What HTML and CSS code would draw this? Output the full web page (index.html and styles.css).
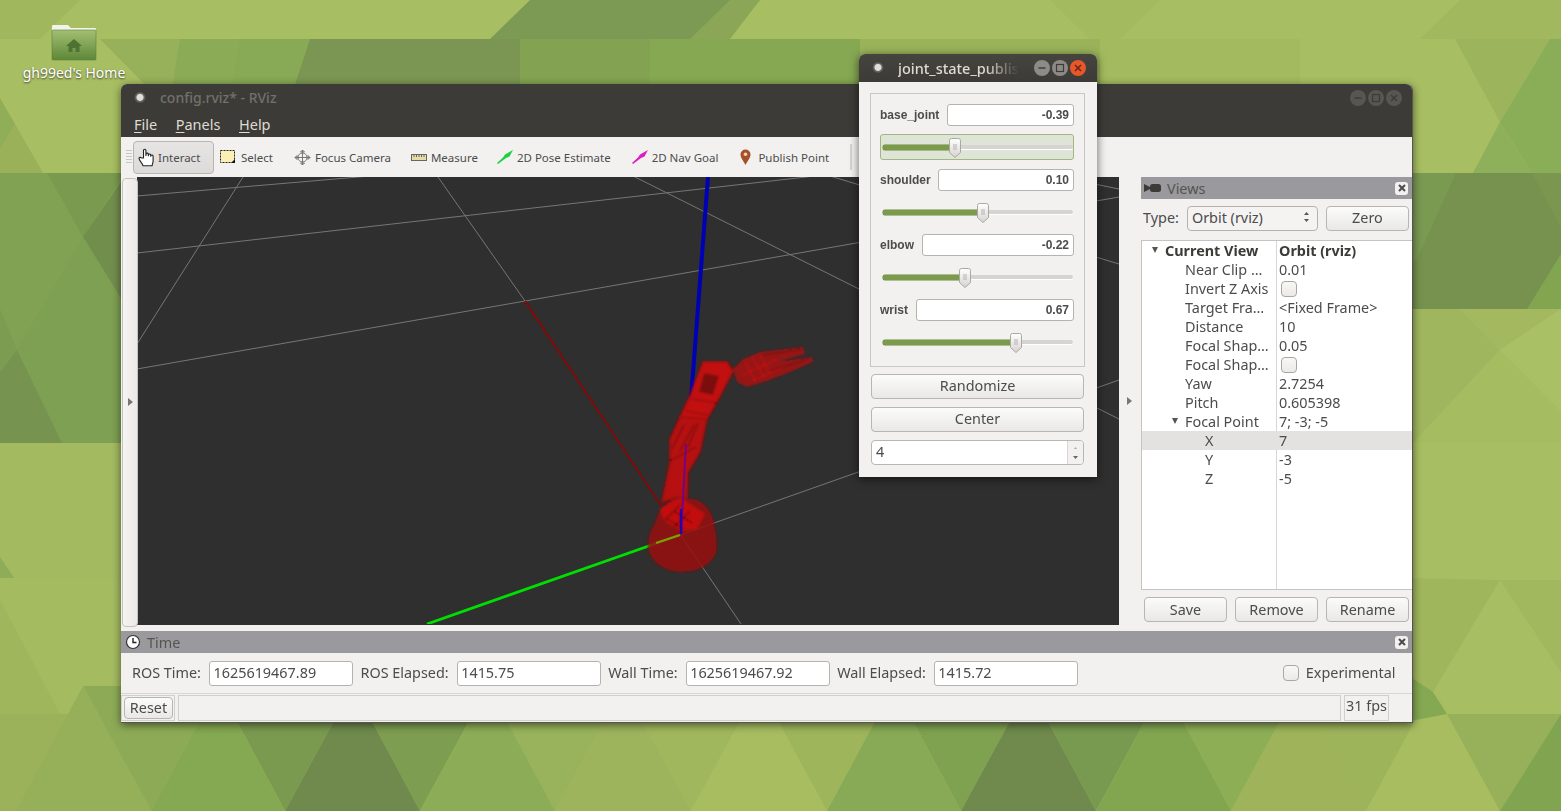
FILE: index.html
```html
<!DOCTYPE html>
<html lang="en">
<head>
<meta charset="utf-8">
<title>config.rviz* - RViz</title>
<link rel="stylesheet" href="styles.css">
</head>
<body>
<svg class="wallpaper" viewBox="0 0 1561 811" width="1561" height="811">
  <rect width="1561" height="811" fill="#a8be62"/>
  <!-- top band -->
  <polygon points="0,0 80,0 40,39 0,39" fill="#a1b75d"/>
  <polygon points="490,39 530,0 760,0 720,39" fill="#7d9a54"/>
  <polygon points="690,39 730,0 760,0 730,39" fill="#8aa656"/>
  <polygon points="1050,0 1160,0 1120,39 1090,39" fill="#a4ba5f"/>
  <polygon points="1460,0 1561,0 1561,39 1420,39" fill="#a2b85e"/>
  <polygon points="100,39 310,39 260,100 160,100" fill="#97b05a"/>
  <polygon points="180,39 250,39 240,100 170,100" fill="#8cab57"/>
  <polygon points="240,39 330,39 300,100 230,100" fill="#88a955"/>
  <polygon points="310,39 520,39 520,100 290,100" fill="#7b9652"/>
  <polygon points="520,39 650,39 650,100 520,100" fill="#84a352"/>
  <polygon points="650,39 860,39 860,100 650,100" fill="#86a852"/>
  <polygon points="860,39 1100,39 1100,100 860,100" fill="#9ab35a"/>
  <polygon points="1100,39 1300,39 1300,100 1100,100" fill="#a4ba5f"/>
  <!-- left strip -->
  <polygon points="0,98 15,124 0,150" fill="#90ad58"/>
  <polygon points="15,124 43,173 0,173 0,150" fill="#9ab15a"/>
  <polygon points="0,173 130,173 130,443 0,443" fill="#80a252"/>
  <polygon points="47,173 125,173 83,237" fill="#7a9a50"/>
  <polygon points="83,237 125,176 125,305" fill="#728e4d"/>
  <polygon points="83,237 125,305 125,443 62,443 17,350" fill="#7ea052"/>
  <polygon points="0,372 17,350 62,443 0,443" fill="#769350"/>
  <polygon points="0,309 17,350 0,372" fill="#7c9c51"/>
  <polygon points="0,443 125,443 125,578 0,578" fill="#a3ba60"/>
  <polygon points="0,557 15,579 0,600" fill="#8fad58"/>
  <polygon points="0,578 125,578 125,714 0,714" fill="#a5bb60"/>
  <polygon points="0,600 60,714 0,714" fill="#9fb65c"/>
  <polygon points="0,714 125,714 125,811 0,811" fill="#9cb25a"/>
  <!-- bottom band: down wedges -->
  <polygon points="83,686 218,686 151,811" fill="#8dab56"/>
  <polygon points="218,686 353,686 285,811" fill="#7a9a50"/>
  <polygon points="353,686 488,686 420,811" fill="#7d9d50"/>
  <polygon points="488,686 623,686 555,811" fill="#98b35b"/>
  <polygon points="623,686 759,686 691,811" fill="#a1b75d"/>
  <polygon points="759,686 894,686 827,811" fill="#9fb55c"/>
  <polygon points="894,686 1029,686 961,811" fill="#7fa250"/>
  <polygon points="1029,686 1164,686 1096,811" fill="#789a50"/>
  <polygon points="1164,686 1299,686 1231,811" fill="#8eae56"/>
  <polygon points="1299,686 1434,686 1366,811" fill="#9eb45b"/>
  <!-- bottom band: up triangles -->
  <polygon points="83,686 151,811 16,811" fill="#95b059"/>
  <polygon points="218,686 285,811 151,811" fill="#85a852"/>
  <polygon points="353,686 420,811 285,811" fill="#6f8a4c"/>
  <polygon points="488,686 555,811 420,811" fill="#8dac57"/>
  <polygon points="623,686 691,811 555,811" fill="#9db35c"/>
  <polygon points="759,686 827,811 691,811" fill="#a8bd60"/>
  <polygon points="894,686 961,811 827,811" fill="#88aa56"/>
  <polygon points="1029,686 1096,811 961,811" fill="#6f8a4c"/>
  <polygon points="1164,686 1231,811 1096,811" fill="#82a650"/>
  <polygon points="1299,686 1366,811 1231,811" fill="#9fb45a"/>
  <polygon points="1434,686 1500,811 1366,811" fill="#a8bd60"/>
  <!-- right strip -->
  <polygon points="1455,39 1550,39 1500,122" fill="#9cb45b"/>
  <polygon points="1550,39 1561,39 1561,173 1532,173 1500,122" fill="#8aad58"/>
  <polygon points="1473,173 1500,122 1532,173" fill="#8fb05a"/>
  <polygon points="1400,173 1561,173 1561,309 1400,309" fill="#76924e"/>
  <polygon points="1400,173 1456,173 1417,259 1400,270" fill="#7a9a52"/>
  <polygon points="1532,173 1561,173 1561,228" fill="#7a964f"/>
  <polygon points="1561,254 1561,309 1527,309" fill="#82a550"/>
  <polygon points="1400,309 1460,309 1500,350 1413,443 1400,443" fill="#a0b65e"/>
  <polygon points="1460,309 1561,309 1500,350" fill="#a4b95f"/>
  <polygon points="1500,350 1561,309 1561,412" fill="#a9c064"/>
  <polygon points="1413,443 1500,350 1561,412 1561,443" fill="#a6bc60"/>
  <polygon points="1400,578 1500,580 1433,692 1400,670" fill="#a0b65d"/>
  <polygon points="1500,580 1561,580 1561,672" fill="#a2b85e"/>
  <polygon points="1400,670 1433,692 1447,714 1400,723" fill="#85a852"/>
  <polygon points="1447,714 1561,714 1500,811" fill="#97b05a"/>
  <polygon points="1561,714 1561,811 1500,811" fill="#80a450"/>
</svg>

<div class="desk-icon">
  <svg width="46" height="38" viewBox="0 0 46 38">
    <defs><linearGradient id="fold" x1="0" y1="0" x2="0" y2="1"><stop offset="0" stop-color="#a3bf72"/><stop offset="1" stop-color="#5d8737"/></linearGradient></defs>
    <path d="M1 5V3q0-1 1-1h15l3 3h24q1 0 1 1v3H1z" fill="#f2f3ea"/>
    <rect x="1" y="7" width="44" height="30" rx="1" fill="url(#fold)" stroke="#5f7f3c" stroke-width=".6"/>
    <path d="M23 16l-8 7h2.500v6h4v-4h3v4h4v-6H31z" fill="#4f7232"/>
  </svg>
  <span class="desk-label">gh99ed's Home</span>
</div>

<div class="window rviz">
  <div class="titlebar">
    <span class="menu-dot"></span>
    <span class="title-dim">config.rviz* - RViz</span>
    <span class="win-btns dim">
      <span class="wbtn"><svg width="10" height="10" viewBox="0 0 10 10"><path d="M1.500 5h7" stroke="#3c3b37" stroke-width="1.400"/></svg></span>
      <span class="wbtn"><svg width="10" height="10" viewBox="0 0 10 10"><rect x="1.500" y="1.500" width="7" height="7" fill="none" stroke="#3c3b37" stroke-width="1.200"/></svg></span>
      <span class="wbtn"><svg width="10" height="10" viewBox="0 0 10 10"><path d="M2 2l6 6M8 2l-6 6" stroke="#3c3b37" stroke-width="1.400"/></svg></span>
    </span>
  </div>
  <div class="menubar">
    <span class="menu"><u>F</u>ile</span>
    <span class="menu"><u>P</u>anels</span>
    <span class="menu"><u>H</u>elp</span>
  </div>
  <div class="toolbar">
    <span class="grip"></span>
    <div class="tool active">
      <svg width="18" height="20" viewBox="0 0 18 20"><path d="M5.500 10V2.500a1.200 1.200 0 0 1 2.400 0V8l.1-2a1.200 1.200 0 0 1 2.300 0v2.300l.1-1.500a1.200 1.200 0 0 1 2.300 0v2l.1-1a1.200 1.200 0 0 1 2.300 0v5.500c0 2-1 3-1 4.500H5c0-2-4-5-4-7.500 0-1.200 1.800-1.200 2.500-.3z" fill="#fff" stroke="#222" stroke-width="1.100"/></svg>
      <span>Interact</span>
    </div>
    <div class="tool t-select">
      <svg width="16" height="14" viewBox="0 0 16 14"><rect x=".5" y=".5" width="14" height="12" fill="#fbf0b4" stroke="#222" stroke-dasharray="2 1"/><path d="M11 13h4V9z" fill="#111"/></svg>
      <span>Select</span>
    </div>
    <div class="tool t-focus">
      <svg width="17" height="17" viewBox="0 0 17 17" fill="none" stroke="#777" stroke-width="1"><circle cx="8.500" cy="8.500" r="4.500"/><path d="M8.500 1v15M1 8.500h15M8.500 1l-2 2h4zM8.500 16l-2-2h4zM1 8.500l2-2v4zM16 8.500l-2-2v4z"/></svg>
      <span>Focus Camera</span>
    </div>
    <div class="tool t-measure">
      <svg width="16" height="7" viewBox="0 0 16 7"><rect x=".5" y=".5" width="15" height="6" fill="#e5dca6" stroke="#666"/><path d="M3 1v2M5.500 1v2M8 1v2M10.500 1v2M13 1v2" stroke="#666"/></svg>
      <span>Measure</span>
    </div>
    <div class="tool t-pose">
      <svg width="16" height="14" viewBox="0 0 16 14"><path d="M0 13L6 7.500 8 4.500 16 0 12.500 6.500 9 8 1 14z" fill="#1fd13f"/></svg>
      <span>2D Pose Estimate</span>
    </div>
    <div class="tool t-nav">
      <svg width="16" height="14" viewBox="0 0 16 14"><path d="M0 13L6 7.500 8 4.500 16 0 12.500 6.500 9 8 1 14z" fill="#d91fc0"/></svg>
      <span>2D Nav Goal</span>
    </div>
    <div class="tool t-point">
      <svg width="11" height="16" viewBox="0 0 11 16"><path d="M5.500 16C3.500 12 .5 9 .5 5.500a5 5 0 0 1 10 0C10.500 9 7.500 12 5.500 16z" fill="#a5502c"/><circle cx="5.500" cy="5.300" r="1.800" fill="#f3d3b5"/></svg>
      <span>Publish Point</span>
    </div>
    <span class="tool-sep"></span>
  </div>

  <div class="main">
    <div class="left-dock"><span class="arrow-r"></span></div>
    <div class="viewport">
      <svg class="scene" viewBox="137 178 982 447" width="982" height="447">
        <defs><filter id="soft" x="-10%" y="-10%" width="120%" height="120%"><feGaussianBlur stdDeviation=".8"/></filter></defs>
        <g stroke="#8e8e8e" stroke-width="1" fill="none" opacity=".75">
          <path d="M137 197L370 177"/>
          <path d="M137 254L815 177"/>
          <path d="M137 370L1119 198"/>
          <path d="M680 536L1119 381"/>
          <path d="M243 178L137 345"/>
          <path d="M438 178L525 302"/>
          <path d="M680 535L741 625"/>
          <path d="M633 177L1119 420"/>
          <path d="M830 177L1119 265"/>
          <path d="M1060 178L1119 190"/>
        </g>
        <path d="M525 302L680 535" stroke="#960000" stroke-width="1.500"/>
        <path d="M708 178L691 400" stroke="#0000b4" stroke-width="4"/>
        <path d="M427 625L680 536" stroke="#00e000" stroke-width="2.800"/>
        <g filter="url(#soft)">
          <path d="M655 524q4-18 18-24h22q16 6 19 24 3 12 3 24c0 14-15 25-35 25-18 0-33-10-34-26q0-13 7-23z" fill="#990808" opacity=".85"/>
          <path d="M660 510l20-12 25 17-8 15-15 2-18-10z" fill="#c81010" opacity=".9"/>
          <path d="M667 520l17 10M674 512l18 12M680 506l-16 16M690 512l-16 16" stroke="#6a0404" stroke-width="1.100" fill="none"/>
          <path d="M662 503l8-40v-23l10-22 27 2-7 33-12 20-1 27-10-2z" fill="#c41010" stroke="#a00808" stroke-width="2" opacity=".92"/>
          <path d="M680 418l10-21 13-34h24l6 9-13 25-13 23z" fill="#cc1010" stroke="#a80808" stroke-width="2" opacity=".94"/>
          <path d="M704 374l15 3-6 19-14-3z" fill="#600606" opacity=".7"/>
          <path d="M692 400l26 4M686 412l22 4" stroke="#7a0606" stroke-width="1" fill="none"/>
          <path d="M672 450l12-24M680 452l14-26M688 448l10-24M670 462l26-14" stroke="#700505" stroke-width="1.400" fill="none"/>
          <path d="M733 370l10-10 17-7 43-5 2 7-28 8 35-5 1 5-23 10-23 9-20 6-10-5z" fill="#b00c0c" opacity=".8"/>
          <path d="M745 362l10 20M752 358l12 20M760 356l10 19M742 376l36-16M752 382l32-14" stroke="#d81414" stroke-width="1" fill="none"/>
          <path d="M762 356l40-6M770 372l38-12" stroke="#6e0606" stroke-width="1" fill="none"/>
        </g>
        <path d="M686 445L681 535" stroke="#6a00a0" stroke-width="2" opacity=".85"/>
        <path d="M681 510v25" stroke="#2a00b0" stroke-width="2.500"/>
        <path d="M656 544L680 536" stroke="#7fa000" stroke-width="2.200"/>
      </svg>
    </div>
    <div class="splitter"><span class="arrow-r"></span></div>

    <div class="views">
      <div class="dock-head">
        <svg class="cam" width="17" height="10" viewBox="0 0 17 10"><path d="M0 1l6 3v2l-6 3z" fill="#3c3b37"/><rect x="6" y="1" width="11" height="8" rx="2.500" fill="#3c3b37"/></svg>
        <span class="dock-title">Views</span>
        <span class="dock-close"><svg width="8" height="8" viewBox="0 0 8 8"><path d="M1 1l6 6M7 1L1 7" stroke="#4c4c4c" stroke-width="2"/></svg></span>
      </div>
      <div class="type-row">
        <span class="lbl">Type:</span>
        <div class="combo"><span>Orbit (rviz)</span><svg width="7" height="12" viewBox="0 0 7 12"><path d="M3.500 1l2.500 3H1zM3.500 11L1 8h5z" fill="#555"/></svg></div>
        <button class="btn zero">Zero</button>
      </div>
      <div class="tree">
        <div class="tree-col"></div>
        <div class="row"><span class="k bold"><i class="tri i0"></i>Current View</span><span class="v bold">Orbit (rviz)</span></div>
        <div class="row"><span class="k">Near Clip …</span><span class="v">0.01</span></div>
        <div class="row"><span class="k">Invert Z Axis</span><span class="v"><i class="check"></i></span></div>
        <div class="row"><span class="k">Target Fra…</span><span class="v">&lt;Fixed Frame&gt;</span></div>
        <div class="row"><span class="k">Distance</span><span class="v">10</span></div>
        <div class="row"><span class="k">Focal Shap…</span><span class="v">0.05</span></div>
        <div class="row"><span class="k">Focal Shap…</span><span class="v"><i class="check"></i></span></div>
        <div class="row"><span class="k">Yaw</span><span class="v">2.7254</span></div>
        <div class="row"><span class="k">Pitch</span><span class="v">0.605398</span></div>
        <div class="row"><span class="k"><i class="tri i1"></i>Focal Point</span><span class="v">7; -3; -5</span></div>
        <div class="row sel"><span class="k deep">X</span><span class="v">7</span></div>
        <div class="row"><span class="k deep">Y</span><span class="v">-3</span></div>
        <div class="row"><span class="k deep">Z</span><span class="v">-5</span></div>
      </div>
      <div class="view-btns">
        <button class="btn">Save</button>
        <button class="btn">Remove</button>
        <button class="btn">Rename</button>
      </div>
    </div>
  </div>

  <div class="time-head">
    <svg width="16" height="16" viewBox="0 0 16 16"><circle cx="8" cy="8" r="6.500" fill="#fff" stroke="#333" stroke-width="1.200"/><path d="M8 4v4.500h3.500" fill="none" stroke="#222" stroke-width="1.400"/></svg>
    <span class="dock-title">Time</span>
    <span class="dock-close"><svg width="8" height="8" viewBox="0 0 8 8"><path d="M1 1l6 6M7 1L1 7" stroke="#4c4c4c" stroke-width="2"/></svg></span>
  </div>
  <div class="time-row">
    <span class="lbl">ROS Time:</span><span class="field">1625619467.89</span>
    <span class="lbl">ROS Elapsed:</span><span class="field">1415.75</span>
    <span class="lbl">Wall Time:</span><span class="field">1625619467.92</span>
    <span class="lbl">Wall Elapsed:</span><span class="field">1415.72</span>
    <span class="exp"><i class="check"></i><span class="lbl">Experimental</span></span>
  </div>
  <div class="status">
    <div class="reset-box"><button class="btn reset">Reset</button></div>
    <div class="status-msg"></div>
    <div class="fps">31 fps</div>
  </div>
</div>

<div class="window joint">
  <div class="titlebar jt">
    <span class="menu-dot"></span>
    <span class="title-on">joint_state_publis</span>
    <span class="win-btns">
      <span class="wbtn"><svg width="10" height="10" viewBox="0 0 10 10"><path d="M1.500 5h7" stroke="#3c3b37" stroke-width="1.400"/></svg></span>
      <span class="wbtn"><svg width="10" height="10" viewBox="0 0 10 10"><rect x="1.500" y="1.500" width="7" height="7" fill="none" stroke="#3c3b37" stroke-width="1.200"/></svg></span>
      <span class="wbtn close"><svg width="10" height="10" viewBox="0 0 10 10"><path d="M2 2l6 6M8 2l-6 6" stroke="#6a2410" stroke-width="1.500"/></svg></span>
    </span>
  </div>
  <div class="joint-body">
    <div class="group">
      <div class="joint-row"><span class="jl">base_joint</span><span class="jv">-0.39</span></div>
      <div class="slider hot"><div class="track"><div class="fill" style="width:38%"></div><svg class="thumb" style="left:38%" width="12" height="20" viewBox="0 0 12 20"><use href="#th"/></svg></div></div>
      <div class="joint-row"><span class="jl">shoulder</span><span class="jv">0.10</span></div>
      <div class="slider"><div class="track"><div class="fill" style="width:52.600%"></div><svg class="thumb" style="left:52.600%" width="12" height="20" viewBox="0 0 12 20"><use href="#th"/></svg></div></div>
      <div class="joint-row"><span class="jl">elbow</span><span class="jv">-0.22</span></div>
      <div class="slider"><div class="track"><div class="fill" style="width:43.200%"></div><svg class="thumb" style="left:43.200%" width="12" height="20" viewBox="0 0 12 20"><use href="#th"/></svg></div></div>
      <div class="joint-row"><span class="jl">wrist</span><span class="jv">0.67</span></div>
      <div class="slider"><div class="track"><div class="fill" style="width:70%"></div><svg class="thumb" style="left:70%" width="12" height="20" viewBox="0 0 12 20"><use href="#th"/></svg></div></div>
    </div>
    <button class="btn wide">Randomize</button>
    <button class="btn wide">Center</button>
    <div class="spin"><span class="spin-v">4</span><span class="spin-arrows"><svg width="7" height="20" viewBox="0 0 7 20"><path d="M3.500 4l1.500 2H2z" fill="#aaa"/><path d="M3.500 16L1 13h5z" fill="#666"/></svg></span></div>
  </div>
</div>

<svg class="defs" width="0" height="0">
  <defs>
    <linearGradient id="thg" x1="0" y1="0" x2="0" y2="1"><stop offset="0" stop-color="#fff"/><stop offset="1" stop-color="#d5d3d0"/></linearGradient>
    <g id="th">
      <path d="M2.500.5h7a2 2 0 0 1 2 2v12L6 19.500.5 14.500v-12a2 2 0 0 1 2-2z" fill="url(#thg)" stroke="#aaa8a4"/>
      <path d="M4 7h4M4 9h4M4 11h4" stroke="#b4b2ae"/>
    </g>
  </defs>
</svg>
</body>
</html>
```
FILE: styles.css
```css
* { box-sizing: border-box; }
html, body { margin: 0; padding: 0; }
body {
  position: relative;
  width: 1561px;
  height: 811px;
  overflow: hidden;
  font-family: "Noto Sans", sans-serif;
  font-size: 14.4px;
  color: #4c4c4c;
}
.wallpaper, .defs { position: absolute; left: 0; top: 0; }

.desk-icon {
  position: absolute;
  left: 14px;
  top: 23px;
  width: 120px;
  display: flex;
  flex-direction: column;
  align-items: center;
}
.desk-label {
  margin-top: 3px;
  font-size: 14px;
  line-height: 18px;
  color: #fff;
  white-space: nowrap;
  text-shadow: 0 1px 2px #3a3a2a;
}

.window { position: absolute; display: flex; flex-direction: column; background: #f2f1f0; }
.rviz {
  left: 121px; top: 84px; width: 1292px; height: 639px;
  border-radius: 6px 6px 0 0;
  border-right: 1px solid #55544f;
  border-bottom: 1px solid #55544f;
  box-shadow: 0 2px 9px rgba(0,0,0,.55);
}
.joint {
  left: 859px; top: 54px; width: 238px; height: 423px;
  border-radius: 6px 6px 0 0;
  box-shadow: 0 2px 10px rgba(0,0,0,.6);
}
.titlebar {
  flex: none;
  height: 28px;
  background: #3c3b37;
  border-radius: 6px 6px 0 0;
  display: flex;
  align-items: center;
  padding-left: 13px;
}
.jt { background: linear-gradient(#45443f, #3c3b37); }
.menu-dot {
  flex: none;
  width: 12px; height: 12px; border-radius: 50%;
  background: radial-gradient(circle at 50% 45%, #e0ded8 0 3px, #6c6b66 4px, #4c4b47 5.5px, #3c3b37 6px);
}
.title-dim { margin-left: 14px; padding-bottom: 1px; font-size: 14px; font-weight: 500; color: #72716b; white-space: nowrap; }
.title-on {
  margin-left: 14px;
  white-space: nowrap;
  font-size: 14.5px;
  font-weight: 500;
  color: #dfdbd2;
  -webkit-mask-image: linear-gradient(90deg, #000 72%, transparent 100%);
  mask-image: linear-gradient(90deg, #000 72%, transparent 100%);
}
.win-btns { margin-left: auto; margin-right: 10px; display: flex; gap: 2px; }
.jt .win-btns { margin-right: 11px; }
.wbtn {
  width: 16px; height: 16px; border-radius: 50%;
  background: #8c8b86;
  display: flex; align-items: center; justify-content: center;
}
.win-btns.dim .wbtn { background: #575652; }
.wbtn.close { background: #e8572c; }

.menubar {
  flex: none;
  height: 25px;
  background: #3c3b37;
  display: flex;
  align-items: center;
  gap: 18.5px;
  padding: 0 0 2px 13px;
}
.menu { color: #dfdbd2; font-size: 14.5px; }
.menu u { text-underline-offset: 2px; }

.toolbar {
  flex: none;
  height: 40px;
  display: flex;
  align-items: center;
  background: #f2f1f0;
  padding-left: 12px;
}
.grip {
  width: 6px; height: 14px; margin-left: -7px; margin-right: 1px;
  background: repeating-linear-gradient(#c8c6c3 0 1px, transparent 1px 3px);
}
.tool { display: flex; align-items: center; gap: 5px; font-size: 11.5px; color: #4c4c4c; white-space: nowrap; }
.tool.active {
  width: 81px; height: 33px;
  margin-top: 1px;
  padding-left: 4px; gap: 2px;
  border: 1px solid #b8b5b2; border-radius: 4px;
  background: linear-gradient(#e6e5e4, #dcdbda);
}
.t-select { margin-left: 6px; }
.t-focus { margin-left: 21px; gap: 4px; }
.t-measure { margin-left: 20px; gap: 4px; }
.t-pose { margin-left: 19px; gap: 4px; }
.t-nav { margin-left: 21px; gap: 4px; }
.t-point { margin-left: 22px; gap: 7px; }
.tool-sep { width: 2px; height: 26px; margin-left: 21px; background: #d5d3d0; }

.main { flex: none; height: 448px; display: flex; }
.left-dock { flex: none; width: 16px; padding: 1px 1px 0 1px; position: relative; }
.left-dock::before {
  content: ""; display: block; height: 447px; width: 14px;
  border: 1px solid #c4c2bf; border-radius: 4px;
  background: linear-gradient(90deg, #f6f5f4, #ebe9e8);
}
.left-dock .arrow-r { position: absolute; left: 7px; top: 221px; }
.arrow-r {
  display: block; width: 0; height: 0;
  border-left: 5px solid #77766f;
  border-top: 4px solid transparent;
  border-bottom: 4px solid transparent;
}
.viewport { flex: none; width: 982px; height: 448px; background: #2f2f2f; overflow: hidden; }
.scene { display: block; }
.splitter { flex: none; width: 22px; display: flex; align-items: center; justify-content: center; padding-right: 2px; }

.views { flex: none; width: 271px; display: flex; flex-direction: column; }
.dock-head {
  flex: none; height: 22px; background: #9a999e;
  display: flex; align-items: center; padding-left: 3px; gap: 6px;
}
.dock-title { color: #55544f; font-size: 14.4px; }
.dock-close {
  margin-left: auto; margin-right: 4px;
  width: 13px; height: 13px; border-radius: 3px; background: #f2f1f0;
  display: flex; align-items: center; justify-content: center;
}
.type-row { flex: none; height: 41px; display: flex; align-items: center; padding: 0 3px 3px 2px; }
.lbl { font-size: 14.4px; color: #4c4c4c; white-space: nowrap; padding-bottom: 1px; }
.combo {
  margin-left: 8px; width: 131px; height: 25px;
  border: 1px solid #b5b3b0; border-radius: 4px;
  background: #f4f3f2;
  display: flex; align-items: center; justify-content: space-between;
  padding: 0 7px 2px 4px; font-size: 14.4px;
}
.btn {
  height: 25px; padding: 0 0 2px;
  font-family: "Noto Sans", sans-serif; font-size: 14.4px; color: #4c4c4c;
  border: 1px solid #b8b5b2; border-radius: 4px;
  background: linear-gradient(#fbfbfa, #e9e8e6);
}
.zero { margin-left: 8px; width: 83px; }

.tree {
  flex: none; height: 350px;
  border: 1px solid #c6c4c1; border-right: 0;
  background: #fff;
  position: relative;
}
.tree-col { position: absolute; left: 134px; top: 0; bottom: 0; width: 1px; background: #d8d6d4; }
.row { height: 19px; display: flex; align-items: center; font-size: 14.4px; line-height: 19px; position: relative; }
.row .k { width: 137px; flex: none; padding-left: 43px; position: relative; white-space: nowrap; }
.row .v { white-space: nowrap; display: flex; align-items: center; }
.row .k.bold { padding-left: 23px; }
.row .k.deep { padding-left: 63px; }
.bold { font-weight: 700; color: #3c3b37; }
.row.sel { background: #e3e2e1; }
.tri {
  position: absolute; top: 6px; width: 0; height: 0;
  border-top: 6px solid #55544f;
  border-left: 3.5px solid transparent;
  border-right: 3.5px solid transparent;
}
.i0 { left: 10px; }
.i1 { left: 30px; }
.check {
  display: block; width: 16px; height: 16px;
  border: 1px solid #a9a7a4; border-radius: 4px;
  background: linear-gradient(#f7f7f6, #eceae9);
  margin-left: 2px;
}
.view-btns { flex: none; display: flex; gap: 8px; padding: 7px 3px 0 3px; }
.view-btns .btn { width: 83px; padding-bottom: 0; }

.time-head {
  flex: none; margin-top: 6px; height: 22px; background: #9a999e;
  display: flex; align-items: center; padding-left: 4px; gap: 6px;
}
.time-row { flex: none; height: 40px; display: flex; align-items: center; padding: 0 16px 0 11px; }
.field {
  width: 144px; height: 25px; margin: 0 7px 0 8.5px;
  background: #fff; border: 1px solid #b5b3b0; border-radius: 3px;
  font-size: 14.4px; line-height: 22px; padding-left: 3px;
}
.exp { margin-left: auto; margin-right: .5px; display: flex; align-items: center; gap: 7px; }
.exp .check { margin-left: 0; }
.status { flex: 1; display: flex; border-top: 1px solid #d9d7d5; padding: 1px 0 1px 0; }
.reset-box { width: 54px; border: 1px solid #d2d0ce; padding: 1px 2px; margin-right: 3px; }
.reset { display: block; width: 49px; height: 22px; font-size: 14.4px; }
.status-msg { width: 1163px; border: 1px solid #d2d0ce; }
.fps { width: 45px; margin-left: 3px; border: 1px solid #d2d0ce; padding-left: 1px; font-size: 14.4px; line-height: 20px; }

.joint-body { flex: 1; padding: 11px 13px 0 12px; display: flex; flex-direction: column; }
.group {
  flex: none; height: 274px; margin: 0 -1px;
  border: 1px solid #c9c7c4;
  padding: 10px 10px 0 9px;
  display: flex; flex-direction: column;
}
.joint-row {
  flex: none; height: 22px; margin-bottom: 8px;
  display: flex; align-items: center; gap: 7.5px;
  font-family: "Liberation Sans", sans-serif; font-weight: 700; font-size: 12px; color: #4c4c4c;
}
.jl { flex: none; white-space: nowrap; }
.jv {
  flex: 1; height: 22px; background: #fff;
  border: 1px solid #b5b3b0; border-radius: 3px;
  text-align: right; padding-right: 4px; line-height: 20px;
}
.slider { flex: none; height: 26px; margin-bottom: 9px; padding: 10px 0 0 2px; border: 1px solid transparent; border-radius: 3px; }
.slider.hot { background: #dfe5d6; border-color: #a3b585; }
.track {
  position: relative; height: 4px;
  background: #d6d4d1; border-radius: 2px;
  box-shadow: 0 1px 0 #fff;
}
.fill { height: 5px; background: #7b9a4a; border-radius: 2px; box-shadow: 0 0 0 .5px #6a8a3e; }
.thumb { position: absolute; top: -7px; margin-left: -6px; }
.wide { flex: none; width: 213px; margin-bottom: 8px; }
.joint-body > .btn:first-of-type { margin-top: 7px; }
.spin {
  flex: none; width: 213px; height: 25px;
  background: #fff; border: 1px solid #b8b5b2; border-radius: 4px;
  display: flex; align-items: center;
  font-size: 14.4px; padding-left: 4px;
}
.spin-v { flex: 1; padding-bottom: 2px; }
.spin-arrows { width: 16px; height: 23px; border-left: 1px solid #d8d6d4; background: #f2f1f0; display: flex; align-items: center; justify-content: center; border-radius: 0 3px 3px 0; }
```
